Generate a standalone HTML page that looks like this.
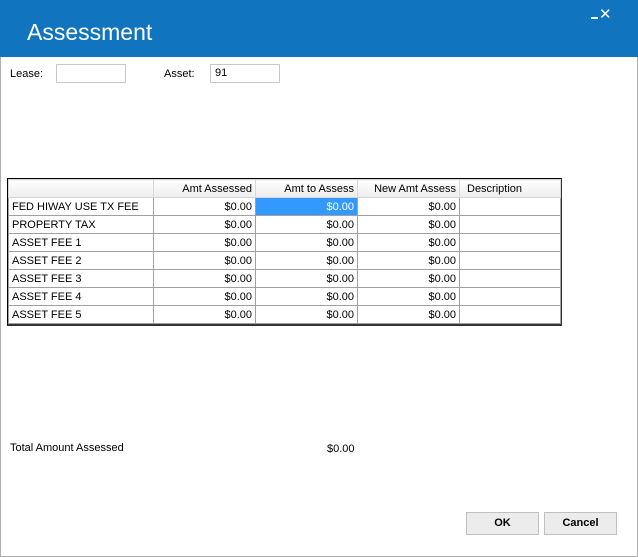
<!DOCTYPE html>
<html><head><style>
*{margin:0;padding:0;box-sizing:border-box}
body{width:638px;height:557px;background:#fff;font-family:"Liberation Sans",sans-serif;font-size:11px;color:#000;position:relative;overflow:hidden}
.a{position:absolute}
.hdr{left:0;top:0;width:638px;height:57px;background:#1174bf}
.frame{left:0;top:57px;width:638px;height:500px;border:1px solid #b0b0b0;border-top:none}
.inp{border:1px solid #c8c8c8;height:19px;background:#fff;padding:2px 4px;font-size:11px}
table{border-collapse:collapse;table-layout:fixed}
td{border:1px solid #a0a0a0;height:18px;padding:0 3px;font-size:11px;white-space:nowrap;overflow:hidden}
.h td{background:linear-gradient(#fff,#ececec);border-color:#d8d8d8;height:18px}
.r{text-align:right}
.btn{border:1px solid #c0c0c0;background:#ececec;height:23px;width:73px;text-align:center;line-height:21px;font-weight:bold;font-size:11px}
</style></head><body>
<div class="a hdr"></div>
<div class="a" style="left:27px;top:19px;color:#fff;font-size:23px;">Assessment</div>
<div class="a" style="left:591px;top:17px;width:7px;height:2px;background:#fff"></div>
<div class="a" style="left:599px;top:5px;color:#fff;font-size:15px">✕</div>
<div class="a frame"></div>
<div class="a" style="left:10px;top:68px">Lease:</div>
<div class="a inp" style="left:56px;top:64px;width:70px"></div>
<div class="a" style="left:164px;top:68px">Asset:</div>
<div class="a inp" style="left:210px;top:64px;width:70px">91</div>
<div class="a" style="left:7px;top:178px;width:555px;height:148px;border:1px solid #000;border-right:2px solid #333;border-bottom:2px solid #333;background:#fff">
<table style="width:552px">
<colgroup><col style="width:145px"><col style="width:102px"><col style="width:102px"><col style="width:102px"><col style="width:101px"></colgroup>
<tr class="h"><td></td><td class="r">Amt Assessed</td><td class="r">Amt to Assess</td><td class="r">New Amt Assess</td><td style="padding-left:7px">Description</td></tr>
<tr><td>FED HIWAY USE TX FEE</td><td class="r">$0.00</td><td class="r" style="background:#3399ff;color:#fff">$0.00</td><td class="r">$0.00</td><td></td></tr>
<tr><td>PROPERTY TAX</td><td class="r">$0.00</td><td class="r">$0.00</td><td class="r">$0.00</td><td></td></tr>
<tr><td>ASSET FEE 1</td><td class="r">$0.00</td><td class="r">$0.00</td><td class="r">$0.00</td><td></td></tr>
<tr><td>ASSET FEE 2</td><td class="r">$0.00</td><td class="r">$0.00</td><td class="r">$0.00</td><td></td></tr>
<tr><td>ASSET FEE 3</td><td class="r">$0.00</td><td class="r">$0.00</td><td class="r">$0.00</td><td></td></tr>
<tr><td>ASSET FEE 4</td><td class="r">$0.00</td><td class="r">$0.00</td><td class="r">$0.00</td><td></td></tr>
<tr><td>ASSET FEE 5</td><td class="r">$0.00</td><td class="r">$0.00</td><td class="r">$0.00</td><td></td></tr>
</table></div>
<div class="a" style="left:10px;top:442px">Total Amount Assessed</div>
<div class="a" style="left:327px;top:443px">$0.00</div>
<div class="a btn" style="left:466px;top:512px">OK</div>
<div class="a btn" style="left:544px;top:512px">Cancel</div>
</body></html>
